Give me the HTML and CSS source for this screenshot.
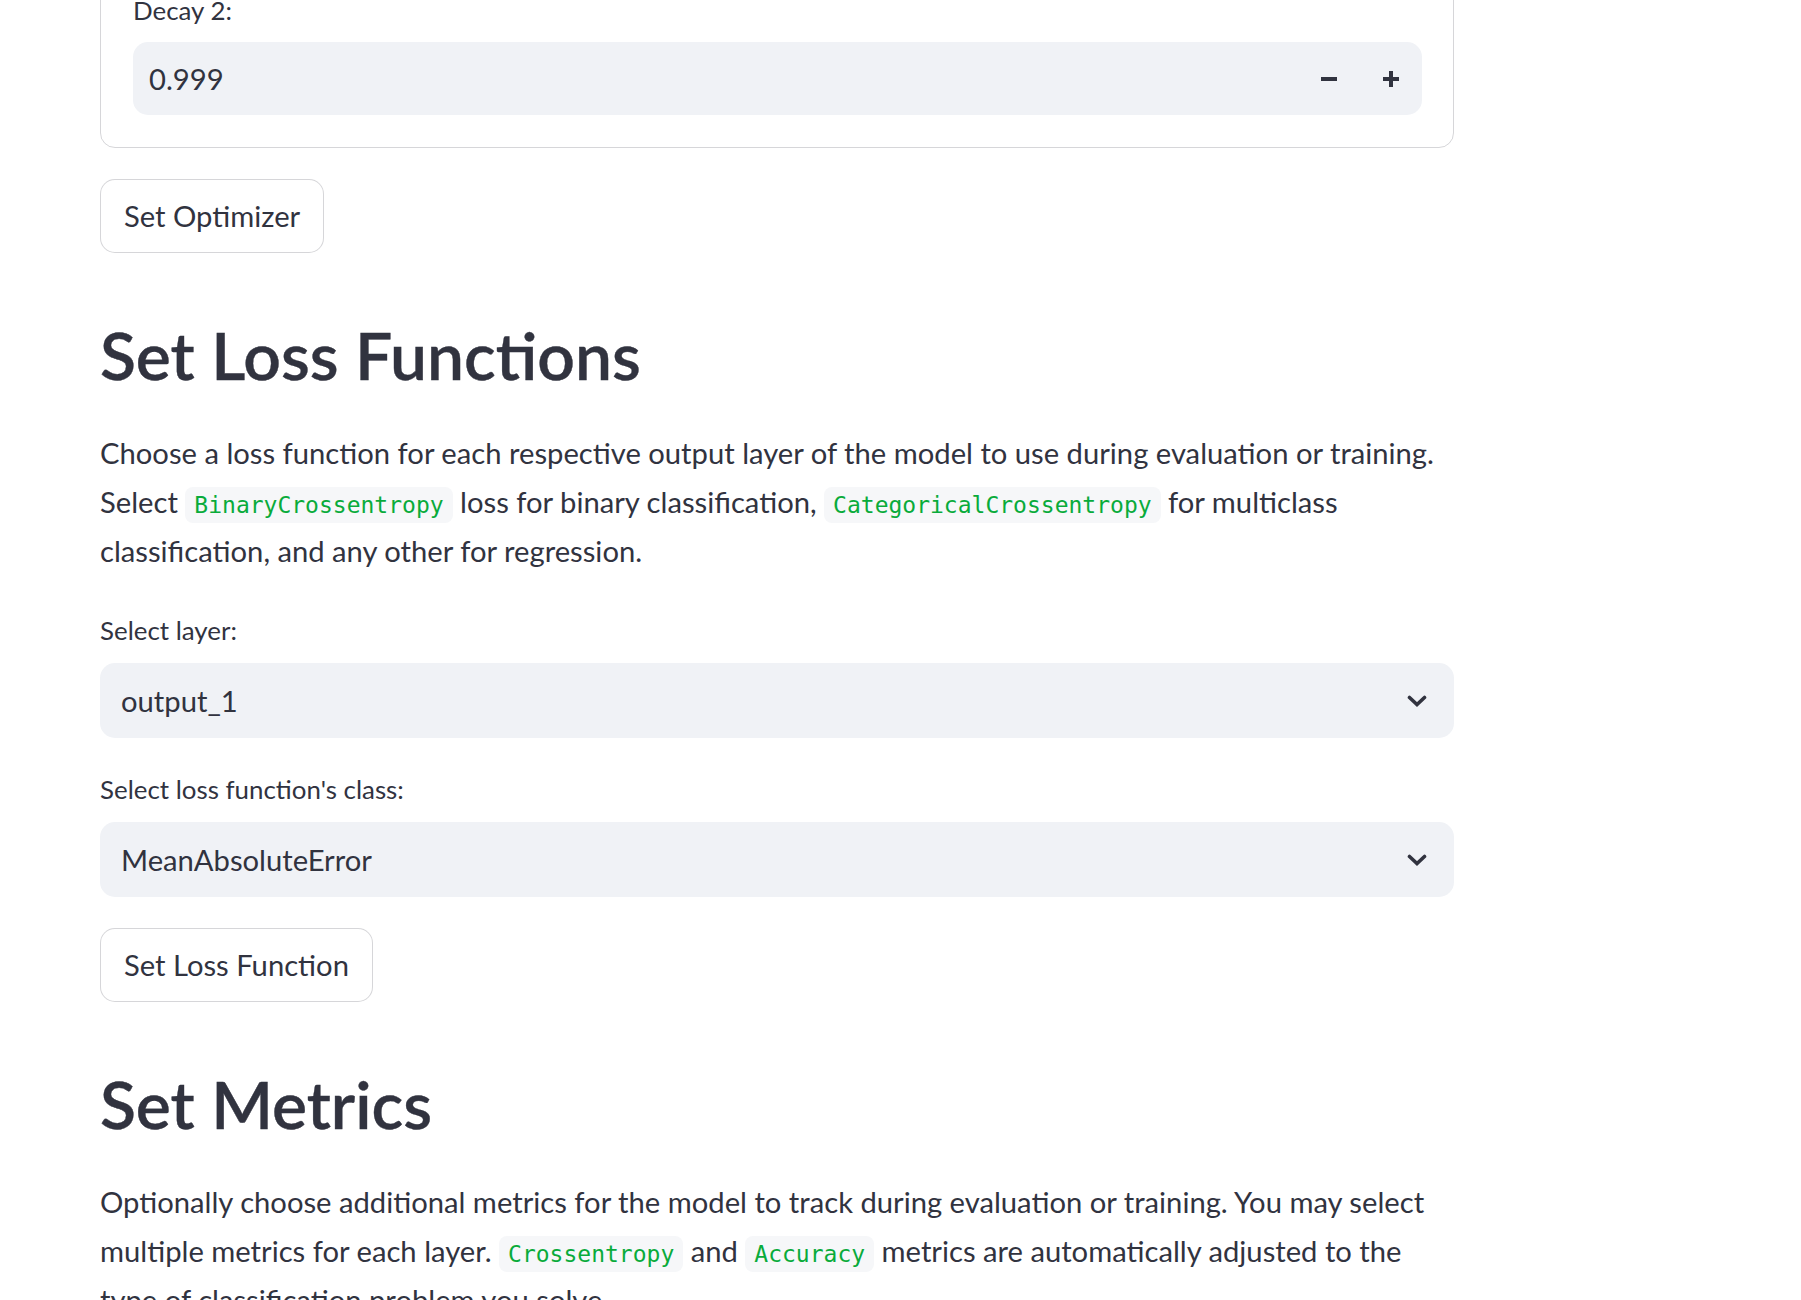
FILE: index.html
```html
<!DOCTYPE html>
<html lang="en">
<head>
<meta charset="utf-8">
<title>Set Loss Functions</title>
<link rel="stylesheet" href="styles.css">
</head>
<body>
<main class="main">
  <section class="card">
    <label class="lbl">Decay 2:</label>
    <div class="num-input">
      <span class="value">0.999</span>
      <div class="steps">
        <span class="step" aria-label="decrement">
          <svg width="16" height="16" viewBox="0 0 16 16"><rect x="0" y="6" width="16" height="4" fill="#31333F"/></svg>
        </span>
        <span class="step" aria-label="increment">
          <svg width="16" height="16" viewBox="0 0 16 16"><rect x="0" y="6" width="16" height="4" fill="#31333F"/><rect x="6" y="0" width="4" height="16" fill="#31333F"/></svg>
        </span>
      </div>
    </div>
  </section>

  <div class="btn-row"><button class="btn">Set Optimizer</button></div>

  <h2 class="heading">Set Loss Functions</h2>

  <p class="para">Choose a loss function for each respective output layer of the model to use during evaluation or training. Select <code>BinaryCrossentropy</code> loss for binary classification, <code>CategoricalCrossentropy</code> for multiclass classification, and any other for regression.</p>

  <div class="field">
    <label class="lbl">Select layer:</label>
    <div class="select">
      <span class="value">output_1</span>
      <svg class="chev" width="20" height="12" viewBox="0 0 20 12"><path d="M2.5 2.5 L10 9.5 L17.5 2.5" fill="none" stroke="#31333F" stroke-width="3.6" stroke-linecap="round" stroke-linejoin="miter"/></svg>
    </div>
  </div>

  <div class="field">
    <label class="lbl">Select loss function's class:</label>
    <div class="select">
      <span class="value">MeanAbsoluteError</span>
      <svg class="chev" width="20" height="12" viewBox="0 0 20 12"><path d="M2.5 2.5 L10 9.5 L17.5 2.5" fill="none" stroke="#31333F" stroke-width="3.6" stroke-linecap="round" stroke-linejoin="miter"/></svg>
    </div>
  </div>

  <div class="btn-row"><button class="btn">Set Loss Function</button></div>

  <h2 class="heading">Set Metrics</h2>

  <p class="para">Optionally choose additional metrics for the model to track during evaluation or training. You may select multiple metrics for each layer. <code>Crossentropy</code> and <code>Accuracy</code> metrics are automatically adjusted to the type of classification problem you solve.</p>
</main>
</body>
</html>
```

FILE: styles.css
```css
html, body {
  margin: 0;
  padding: 0;
  background: #ffffff;
  overflow: hidden;
}

body {
  font-family: "Lato", "Noto Sans", sans-serif;
  color: #31333F;
  font-size: 29.2px;
  line-height: 49px;
}

.main {
  width: 1354px;
  padding: 0 0 0 100px;
  display: flex;
  flex-direction: column;
  gap: 31px;
}

.card {
  margin-top: -41px;
  border: 1px solid rgba(49, 51, 63, 0.2);
  border-radius: 15px;
  padding: 30px 31px 32px 32px;
  display: flex;
  flex-direction: column;
}

.lbl {
  display: block;
  font-size: 25.9px;
  line-height: 40px;
  margin-bottom: 12px;
  color: #31333F;
}

.field .lbl {
  margin-bottom: 13px;
}

.num-input {
  height: 73px;
  background: #F0F2F6;
  border-radius: 15px;
  display: flex;
  align-items: center;
  padding-left: 16px;
}

.num-input .value {
  flex: 1;
}

.steps {
  display: flex;
  height: 100%;
}

.step {
  width: 62px;
  display: flex;
  align-items: center;
  justify-content: center;
}

.step svg {
  display: block;
}

.btn-row {
  display: flex;
}

.btn {
  font-family: inherit;
  font-size: 29.2px;
  color: #31333F;
  background: #ffffff;
  border: 1px solid rgba(49, 51, 63, 0.2);
  border-radius: 15px;
  height: 74px;
  padding: 0 23px;
  line-height: 1;
  cursor: pointer;
}

.heading {
  margin: 0;
  padding: 31px 0 2px;
  font-size: 66px;
  line-height: 80px;
  font-weight: 600;
  color: #31333F;
  -webkit-text-stroke: 0.4px #31333F;
}

.para {
  margin: 0;
  padding-bottom: 4px;
}

.para code {
  font-family: "DejaVu Sans Mono", "Liberation Mono", monospace;
  font-size: 23px;
  line-height: 1.2;
  color: #09AB3B;
  background: #F6F7F9;
  border-radius: 8px;
  padding: 5px 9px;
}

.select {
  height: 75px;
  background: #F0F2F6;
  border-radius: 15px;
  display: flex;
  align-items: center;
  padding: 0 27px 0 21px;
}

.select .value {
  flex: 1;
}

.chev {
  display: block;
}
```
